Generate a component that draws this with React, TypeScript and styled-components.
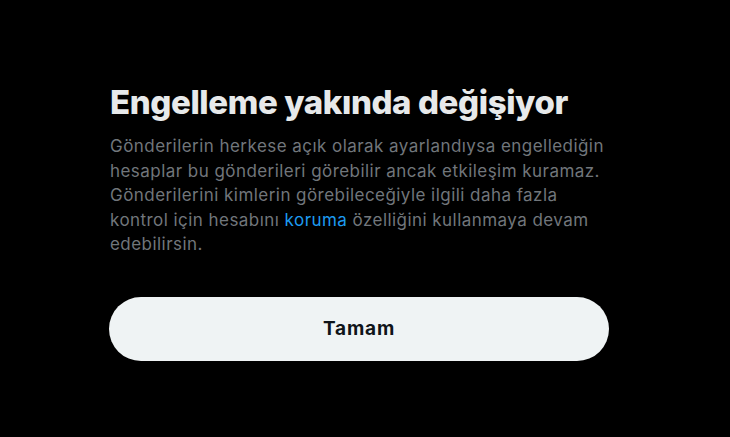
import React from 'react';
import styled, { createGlobalStyle } from 'styled-components';

const GlobalStyle = createGlobalStyle`
    html, body {
        margin: 0;
        padding: 0;
        background: #000000;
    }
    body {
        font-family: Inter, "Noto Sans", "DejaVu Sans", sans-serif;
        -webkit-font-smoothing: antialiased;
    }
`;

const Page = styled.div`
    width: 730px;
    height: 437px;
    background: #000000;
    box-sizing: border-box;
    padding: 84px 0 0 109px;
`;

const Dialog = styled.div`
    width: 500px;
    display: flex;
    flex-direction: column;
`;

const Title = styled.h1`
    margin: 0 0 0 1px;
    font-size: 33px;
    line-height: 36px;
    font-weight: 800;
    color: #e7e9ea;
    letter-spacing: -0.4px;
    white-space: nowrap;
`;

const Body = styled.p`
    margin: 14px 0 0 1px;
    font-size: 17px;
    line-height: 24.5px;
    font-weight: 400;
    color: #71767b;
    letter-spacing: 0.45px;
    white-space: nowrap;
`;

const Link = styled.a`
    color: #1d9bf0;
    text-decoration: none;
    cursor: pointer;
`;

const Button = styled.button`
    margin-top: 40px;
    width: 500px;
    height: 64px;
    border: none;
    border-radius: 32px;
    background: #eff3f4;
    color: #0f1419;
    font-family: inherit;
    font-size: 19px;
    font-weight: 700;
    letter-spacing: 0.8px;
    cursor: pointer;
`;

export default function App() {
    return (
        <>
            <GlobalStyle />
            <Page>
                <Dialog>
                    <Title>Engelleme yakında değişiyor</Title>
                    <Body>
                        Gönderilerin herkese açık olarak ayarlandıysa engellediğin<br />
                        hesaplar bu gönderileri görebilir ancak etkileşim kuramaz.<br />
                        Gönderilerini kimlerin görebileceğiyle ilgili daha fazla<br />
                        kontrol için hesabını <Link>koruma</Link> özelliğini kullanmaya devam<br />
                        edebilirsin.
                    </Body>
                    <Button>Tamam</Button>
                </Dialog>
            </Page>
        </>
    );
}
